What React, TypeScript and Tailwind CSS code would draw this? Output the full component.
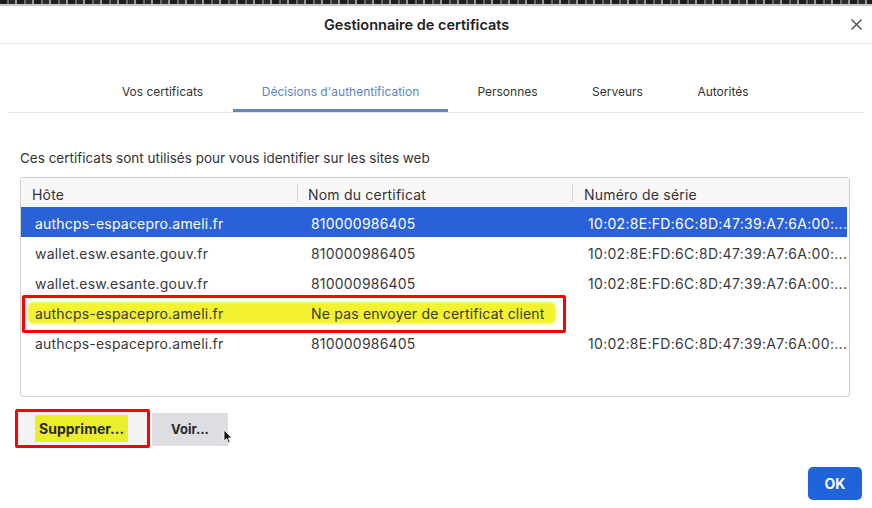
import React from "react";

const rows = [
  { host: "authcps-espacepro.ameli.fr", name: "810000986405", serial: "10:02:8E:FD:6C:8D:47:39:A7:6A:00:...", selected: true },
  { host: "wallet.esw.esante.gouv.fr", name: "810000986405", serial: "10:02:8E:FD:6C:8D:47:39:A7:6A:00:..." },
  { host: "wallet.esw.esante.gouv.fr", name: "810000986405", serial: "10:02:8E:FD:6C:8D:47:39:A7:6A:00:..." },
  { host: "authcps-espacepro.ameli.fr", name: "Ne pas envoyer de certificat client", serial: "", marked: true },
  { host: "authcps-espacepro.ameli.fr", name: "810000986405", serial: "10:02:8E:FD:6C:8D:47:39:A7:6A:00:..." },
];

const tabs = [
  { label: "Vos certificats", w: "w-[133px]" },
  { label: "Décisions d'authentification", w: "w-[215px]", active: true },
  { label: "Personnes", w: "w-[111px]" },
  { label: "Serveurs", w: "w-[101px]" },
  { label: "Autorités", w: "w-[102px]" },
];

export default function App() {
  return (
    <div className="w-[872px] h-[508px] bg-white overflow-hidden flex flex-col font-['Inter','Liberation_Sans',sans-serif] text-[#333]">
      {/* clipped bottom edge of the page text behind the dialog */}
      <div className="h-[4px] bg-[repeating-linear-gradient(90deg,#1e1e1e_0_7px,#6a6a6a_7px_9px,#2a2a2a_9px_15px,#9a9a9a_15px_17px)] blur-[0.5px]" />
      <div className="h-[2px] bg-[#c8c8c8]" />

      {/* header */}
      <div className="h-[38px] flex items-center border-b border-[#e4e4e4]">
        <div className="pl-[324px] text-[14.5px] font-semibold text-[#222]">Gestionnaire de certificats</div>
        <button className="ml-auto mr-[9px] w-[14px] h-[14px] flex items-center justify-center text-[#555]">
          <svg width="13" height="13" viewBox="0 0 13 13" fill="none" stroke="currentColor" strokeWidth="1.5">
            <path d="M1.5 1.5 L11.5 11.5 M11.5 1.5 L1.5 11.5" />
          </svg>
        </button>
      </div>

      {/* tabs */}
      <div className="pt-[40px] mx-[8px] border-b border-[#e6e6e6] flex">
        <div className="flex gap-[4px] pl-[88px]">
          {tabs.map((t) => (
            <div
              key={t.label}
              className={`${t.w} text-center text-[12px] leading-[16px] pb-[9px] border-b-[3px] ${
                t.active ? "border-[#5f86c6] text-[#5a86c8]" : "border-transparent text-[#333]"
              }`}
            >
              {t.label}
            </div>
          ))}
        </div>
      </div>

      {/* description */}
      <div className="mt-[37px] px-[20px] text-[13.5px] leading-[16px] text-[#333]">
        Ces certificats sont utilisés pour vous identifier sur les sites web
      </div>

      {/* table */}
      <div className="mt-[11px] ml-[20px] w-[830px] h-[220px] border border-[#cfcfcf] rounded-[3px] relative text-[14px] tracking-[0.2px]">
        <div className="h-[29px] flex items-center bg-[#f7f7f7] text-[#333] pt-[4px]">
          <div className="w-[276px] pl-[11px]">Hôte</div>
          <div className="w-px h-[18px] bg-[#d6d6d6] -mt-[4px]" />
          <div className="w-[274px] pl-[10px]">Nom du certificat</div>
          <div className="w-px h-[18px] bg-[#d6d6d6] -mt-[4px]" />
          <div className="flex-1 pl-[11px]">Numéro de série</div>
        </div>
        {rows.map((r, i) => (
          <div
            key={i}
            className={`h-[30px] flex items-center relative pt-[3px] ${
              r.selected ? "bg-[#2b61d6] text-white mr-[2px]" : "text-[#3a3a3a]"
            }`}
          >
            {r.marked && (
              <div className="absolute left-[7px] top-[5px] w-[528px] h-[22px] bg-[#f2f230] rounded-[6px] blur-[1px]" />
            )}
            <div className="w-[277px] pl-[14px] relative">{r.host}</div>
            <div className="w-[275px] pl-[13px] relative">{r.name}</div>
            <div className="flex-1 pl-[15px] whitespace-nowrap overflow-hidden relative tracking-[0.3px]">{r.serial}</div>
          </div>
        ))}
        {/* annotation box */}
        <div className="absolute left-[1px] top-[117px] w-[544px] h-[38px] border-[3px] border-[#ff0000] rounded-[2px]" />
      </div>

      {/* buttons */}
      <div className="mt-[12px] ml-[15px] flex items-start gap-[2px] relative">
        <div className="w-[135px] h-[39px] border-[3px] border-[#ff0000] rounded-[2px] bg-[#f3f3f5] flex items-center pl-[17px]">
          <span className="bg-[#eaee2c] px-[4px] py-[3px] text-[14px] font-bold text-[#2a2a2a]">Supprimer...</span>
        </div>
        <div className="mt-[4px] w-[76px] h-[33px] bg-[#dedee2] flex items-center justify-center text-[13px] font-bold text-[#2a2a2a]">
          Voir...
        </div>
        <svg className="absolute left-[208px] top-[20px]" width="10" height="15" viewBox="0 0 10 15">
          <path d="M1 1 L1 12 L3.6 9.6 L5.6 14 L7.2 13.2 L5.3 9 L8.8 9 Z" fill="#111" stroke="#fff" strokeWidth="0.8" />
        </svg>
      </div>

      {/* OK */}
      <div className="mt-[19px] flex">
        <button className="ml-auto mr-[10px] w-[54px] h-[33px] rounded-[5px] bg-[#1f64d8] text-white text-[14px] font-bold">
          OK
        </button>
      </div>
    </div>
  );
}
